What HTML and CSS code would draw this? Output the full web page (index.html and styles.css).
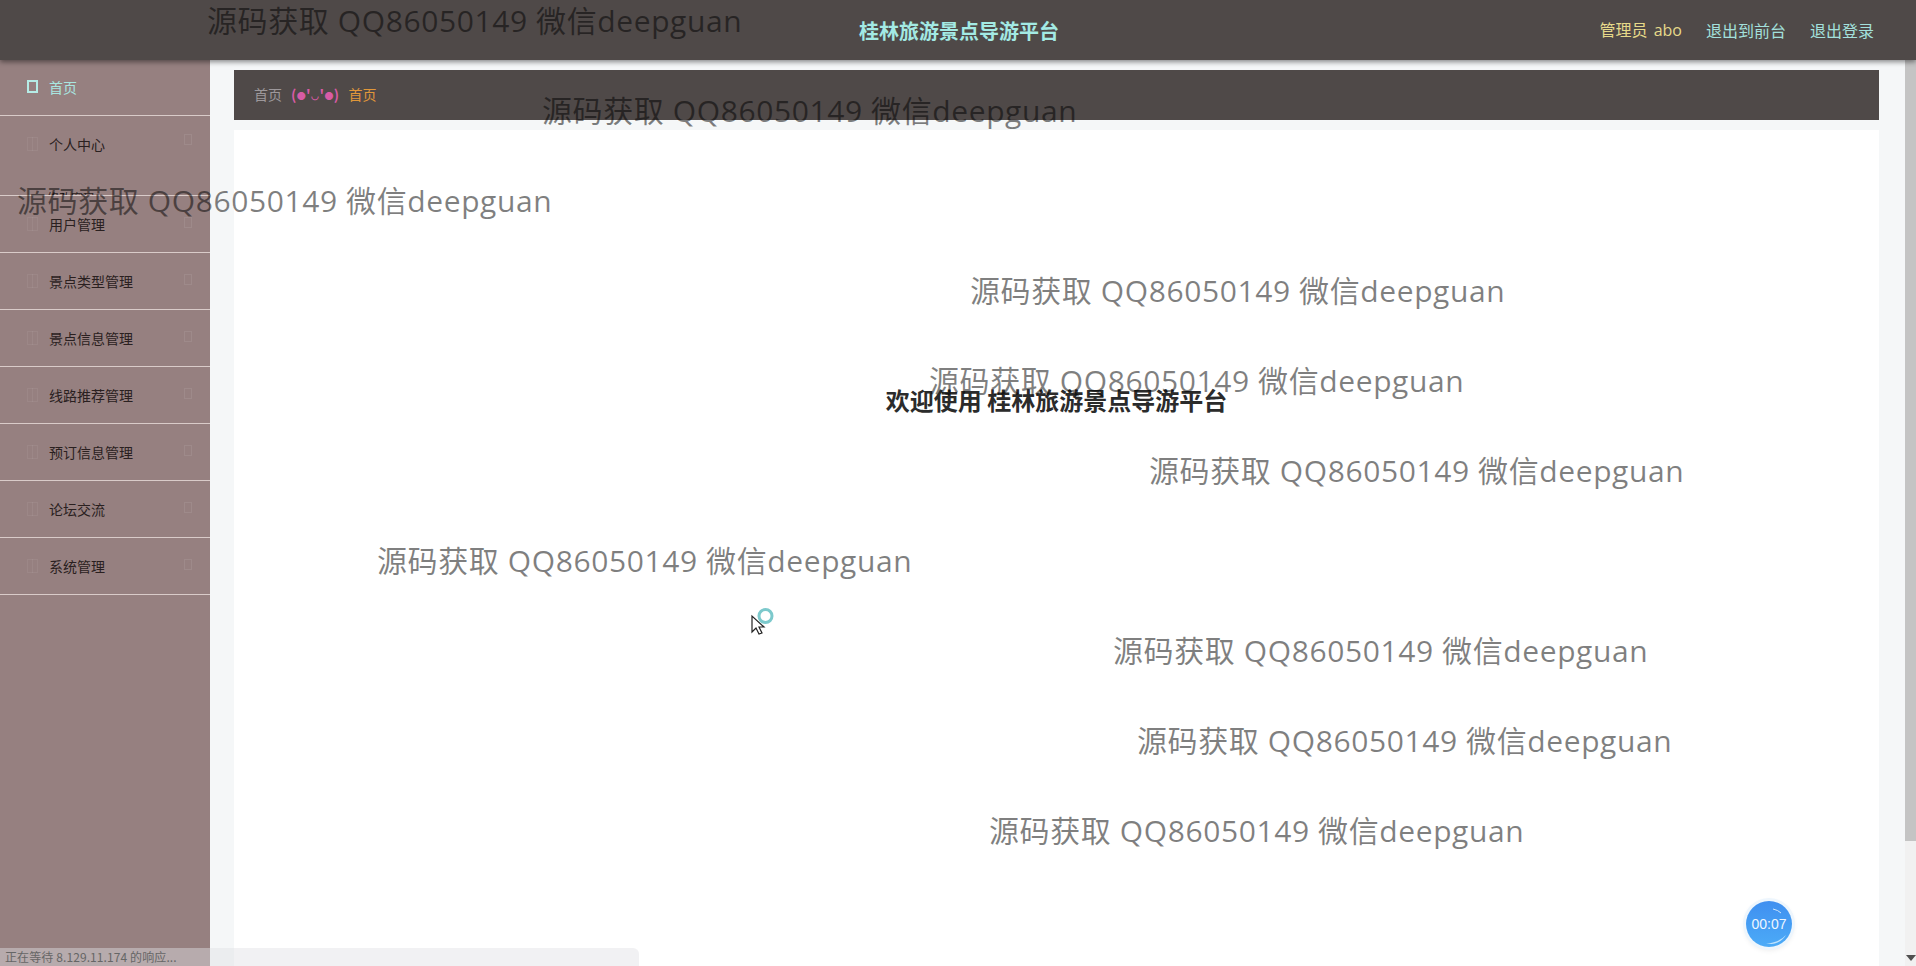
FILE: index.html
```html
<!DOCTYPE html>
<html lang="zh">
<head>
<meta charset="utf-8">
<title>桂林旅游景点导游平台</title>
<link rel="stylesheet" href="styles.css">
</head>
<body>
<header class="topbar">
  <div class="brand">桂林旅游景点导游平台</div>
  <div class="account">
    <span class="user">管理员 abo</span>
    <a class="link">退出到前台</a>
    <a class="link">退出登录</a>
  </div>
</header>
<div class="shell">
  <nav class="side">
    <a class="item active"><i class="ic"></i><span>首页</span></a>
    <div class="item open">
      <i class="ic"></i><span>个人中心</span><i class="arrow"></i>
      <div class="sub">修改密码</div>
    </div>
    <a class="item"><i class="ic"></i><span>用户管理</span><i class="arrow"></i></a>
    <a class="item"><i class="ic"></i><span>景点类型管理</span><i class="arrow"></i></a>
    <a class="item"><i class="ic"></i><span>景点信息管理</span><i class="arrow"></i></a>
    <a class="item"><i class="ic"></i><span>线路推荐管理</span><i class="arrow"></i></a>
    <a class="item"><i class="ic"></i><span>预订信息管理</span><i class="arrow"></i></a>
    <a class="item"><i class="ic"></i><span>论坛交流</span><i class="arrow"></i></a>
    <a class="item"><i class="ic"></i><span>系统管理</span><i class="arrow"></i></a>
  </nav>
  <main class="main">
    <div class="crumbs">
      <span class="c1">首页</span>
      <span class="c2">(<small>●</small>'<small>◡</small>'<small>●</small>)</span>
      <span class="c3">首页</span>
    </div>
    <section class="welcome">
      <h1>欢迎使用 桂林旅游景点导游平台</h1>
    </section>
  </main>
  <div class="scrollbar">
    <div class="thumb"></div>
    <i class="down"></i>
  </div>
</div>

<div class="mark m1">源码获取 QQ86050149 微信deepguan</div>
<div class="mark m2">源码获取 QQ86050149 微信deepguan</div>
<div class="mark m3">源码获取 QQ86050149 微信deepguan</div>
<div class="mark m4">源码获取 QQ86050149 微信deepguan</div>
<div class="mark m5">源码获取 QQ86050149 微信deepguan</div>
<div class="mark m6">源码获取 QQ86050149 微信deepguan</div>
<div class="mark m7">源码获取 QQ86050149 微信deepguan</div>
<div class="mark m8">源码获取 QQ86050149 微信deepguan</div>
<div class="mark m9">源码获取 QQ86050149 微信deepguan</div>
<div class="mark m10">源码获取 QQ86050149 微信deepguan</div>

<svg class="cursor" width="26" height="28" viewBox="0 0 26 28">
  <circle cx="16.5" cy="8" r="6.5" fill="#fff" stroke="#7cc9cc" stroke-width="3"/>
  <path d="M3 8v16l4-4 3 6 3-1-3-6h5z" fill="#fff" stroke="#222" stroke-width="1.2"/>
</svg>

<div class="timer">
  <svg class="gloss" width="46" height="46" viewBox="0 0 46 46">
    <path d="M27 8q5 1 8 4" fill="none" stroke="#cfe6fb" stroke-width="1"/>
    <path d="M20 43q14 1 20-9q-6 7-20 9z" fill="#bfe3fc"/>
  </svg>
  <span>00:07</span>
</div>
<div class="status">正在等待 8.129.11.174 的响应...</div>
</body>
</html>
```
FILE: styles.css
```css
* { box-sizing: border-box; }
html, body { margin: 0; height: 100%; overflow: hidden; }
body {
  font-family: "Noto Sans CJK SC", "Liberation Sans", sans-serif;
  background: #f5f7f8;
  color: #333;
}
.topbar {
  position: relative;
  z-index: 2;
  height: 60px;
  background: #4f4948;
  box-shadow: 0 2px 5px rgba(0, 0, 0, 0.45);
  display: flex;
  align-items: center;
  padding: 0 42px 0 0;
}
.brand {
  position: absolute;
  left: 859px;
  top: 18px;
  font-size: 20px;
  line-height: 26px;
  font-weight: 700;
  color: #a3eae4;
  white-space: nowrap;
}
.account {
  margin-left: auto;
  display: flex;
  gap: 24px;
  font-size: 16px;
  line-height: 60px;
}
.user {
  color: #e6d98a;
  font-family: "Open Sans", "Noto Sans CJK SC", sans-serif;
  word-spacing: 2px;
}
.link { color: #a3e0dc; }
.shell { display: flex; height: 906px; }
.side {
  width: 210px;
  flex: none;
  background: #968080;
}
.item {
  position: relative;
  height: 57px;
  display: flex;
  align-items: center;
  border-bottom: 1px solid #d9cbc9;
  color: #2a2020;
  font-size: 14px;
  padding: 0 18px 0 27px;
}
.item span { margin-left: 11px; }
.item.active { height: 56px; padding-bottom: 2px; color: #a9e6e0; }
.item.open { height: 80px; align-items: flex-start; padding-top: 18px; }
.sub {
  position: absolute;
  left: 47px;
  bottom: 0;
  height: 5px;
  overflow: hidden;
  font-size: 12px;
  line-height: 16px;
  color: #2a2020;
}
.ic {
  width: 11px;
  height: 14px;
  flex: none;
  border: 1px solid rgba(255, 255, 255, 0.06);
  background: linear-gradient(90deg, transparent 4px, rgba(255, 255, 255, 0.06) 4px, rgba(255, 255, 255, 0.06) 5px, transparent 5px);
}
.open .ic { margin-top: 3px; }
.active .ic { height: 13px; border: 2px solid #b5ece6; background: none; margin-right: 0; }
.arrow {
  margin-left: auto;
  margin-top: -4px;
  width: 8px;
  height: 11px;
  border: 1px solid rgba(255, 255, 255, 0.08);
}
.open .arrow { margin-top: 0; }
.main {
  flex: 1;
  min-width: 0;
  padding: 10px 26px 0 24px;
  display: flex;
  flex-direction: column;
}
.crumbs {
  height: 50px;
  flex: none;
  background: #4f4948;
  display: flex;
  align-items: center;
  gap: 9px;
  padding: 0 20px 2px;
  font-size: 14px;
}
.c1 { color: #9d989b; }
.c2 { color: #d85ba5; font-weight: 700; font-size: 14px; letter-spacing: 0.4px; }
.c2 small { font-size: 9px; vertical-align: 1px; }
.c3 { color: #e0973a; }
.welcome {
  flex: 1;
  margin-top: 10px;
  background: #fff;
  padding-top: 253px;
  text-align: center;
}
.welcome h1 {
  margin: 0;
  font-size: 24px;
  line-height: 34px;
  font-weight: 700;
  color: #2b2b2b;
}
.scrollbar {
  width: 11px;
  flex: none;
  background: #f1f1f1;
  position: relative;
}
.thumb { height: 781px; background: #c4c4c4; }
.down {
  position: absolute;
  left: 1px;
  bottom: 5px;
  border: 5px solid transparent;
  border-top: 6px solid #505050;
  border-bottom: 0;
}
.mark {
  position: absolute;
  z-index: 5;
  font-family: "Open Sans", "Noto Sans CJK SC", sans-serif;
  font-size: 30px;
  letter-spacing: 0.6px;
  line-height: 40px;
  color: rgba(0, 0, 0, 0.5);
  white-space: nowrap;
  pointer-events: none;
}
.m1 { left: 207px; top: 1px; }
.m2 { left: 542px; top: 91px; }
.m3 { left: 17px; top: 181px; }
.m4 { left: 970px; top: 271px; }
.m5 { left: 929px; top: 361px; }
.m6 { left: 1149px; top: 451px; }
.m7 { left: 377px; top: 541px; }
.m8 { left: 1113px; top: 631px; }
.m9 { left: 1137px; top: 721px; }
.m10 { left: 989px; top: 811px; }
.cursor { position: absolute; left: 749px; top: 608px; z-index: 6; }
.timer {
  position: absolute;
  left: 1746px;
  top: 901px;
  width: 46px;
  height: 46px;
  border-radius: 50%;
  background: linear-gradient(180deg, #3f8ff0, #4cabf7);
  box-shadow: 0 0 0 3px #eef6fd, 0 2px 6px rgba(0, 0, 0, 0.12);
  color: #eef6ff;
  font: 14px/47px "Liberation Sans", sans-serif;
  text-align: center;
  z-index: 6;
}
.gloss { position: absolute; left: 0; top: 0; }
.timer span { position: relative; }
.status {
  position: absolute;
  left: 0;
  bottom: 0;
  width: 639px;
  height: 18px;
  z-index: 7;
  background: rgba(225, 225, 228, 0.45);
  color: #666;
  font-size: 12px;
  letter-spacing: 0.1px;
  line-height: 18px;
  padding-left: 5px;
  border-top-right-radius: 6px;
}
```
